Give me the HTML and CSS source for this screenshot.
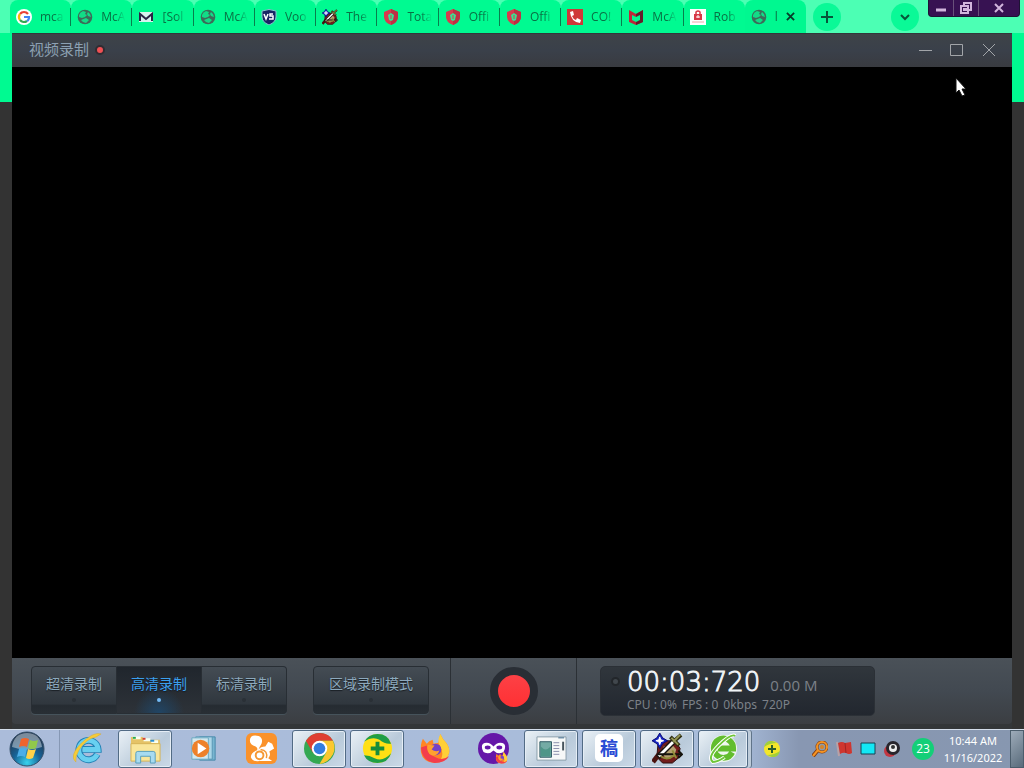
FILE: index.html
```html
<!DOCTYPE html>
<html lang="zh">
<head>
    <meta charset="UTF-8">
    <meta name="viewport" content="width=device-width, initial-scale=1.0">
    <title>视频录制</title>
    <link rel="stylesheet" href="styles.css">
</head>
<body>
    <svg class="sprites" width="0" height="0" aria-hidden="true">
        <symbol id="globe" viewBox="0 0 16 16">
            <circle cx="8" cy="8" r="7.3" fill="#3d6b59"/>
            <path d="M2 6q1-3 4-4l3 1-1 2 2 1-2 2-3 1-3-1zM11 3q3 2 3 5l-3-1-1-2zM4 11l5-2 3 2-3 3q-3 0-5-3z" fill="#12dc87"/>
        </symbol>
        <symbol id="shield" viewBox="0 0 16 16">
            <path d="M8 0l7 3v5q0 5-7 8-7-3-7-8V3z" fill="#d83b4e"/>
            <path d="M8 0l7 3v5q0 5-7 8z" fill="#bd3043"/>
            <path d="M8 4l3 2-1 5-2 1-2-1-1-5z" fill="#3de093"/>
            <path d="M8 6v4" stroke="#d83b4e"/>
        </symbol>
        <symbol id="sword" viewBox="0 0 32 32">
            <path d="M10 8h14l5 8-2 10-6 5H11l-6-6 1-12z" fill="#711c1c" stroke="#2a1010"/>
            <path d="M12 14l8-3 5 6-2 7-8 3-5-6z" fill="#b3a070"/>
            <path d="M1 30l7-9" stroke="#4b130f" stroke-width="5"/>
            <path d="M6 25L24 7" stroke="#1a1512" stroke-width="6"/>
            <path d="M7 24L24 7" stroke="#fff" stroke-width="3"/>
            <path d="M22 9l8-7M19 4l9 9" stroke="#313012" stroke-width="4"/>
            <path d="M22 9l7-7M20 5l7 7" stroke="#949653" stroke-width="2"/>
            <path d="M6 22h24M27 18l4 4-4 4" fill="none" stroke="#15120c" stroke-width="2"/>
            <path d="M9 24q7 5 14-1M21 18l4 8" fill="none" stroke="#908a38" stroke-width="2"/>
            <path d="M8 0l3 5 5 3-5 3-3 5-3-5-5-3 5-3z" fill="#1725c4" stroke="#080b70"/>
            <path d="M8 4l1 3 3 1-3 1-1 3-1-3-3-1 3-1z" fill="#fff" stroke="#fff"/>
        </symbol>
        <symbol id="fox" viewBox="0 0 32 32">
            <path d="M3 6l4 5q2-3 6-4l1 4 5-1 2-9q2 5 6 9 4 5 3 11-3 10-15 10Q3 30 1 20 0 12 3 6z" fill="#ff8624"/>
            <path d="M21 1q2 5 6 9 4 5 3 11-2 7-9 8 4-8 0-15-4-5 0-13z" fill="#ffcf37"/>
            <path d="M1 15q1 14 14 16 11 0 15-7-7 5-14 1Q7 22 7 13z" fill="#f33d4c"/>
            <circle cx="16" cy="17" r="6" fill="#7442c8"/>
            <path d="M8 12l7 1-3 4q4 3 8 1-2 6-8 5-6-3-4-11z" fill="#ffa12f"/>
        </symbol>
    </svg>

    <nav class="browser-strip">
        <div class="tabs">
            <a href="#" class="tab"><svg viewBox="0 0 16 16"><circle cx="8" cy="8" r="8" fill="#fff"/><g fill="none" stroke-width="2.2"><path d="M12 5A5 5 0 0 0 4 5" stroke="#e94235"/><path d="M4 5a5 5 0 0 0 0 6" stroke="#fabb05"/><path d="M4 11a5 5 0 0 0 7 1" stroke="#34a853"/><path d="M8 8h5q0 3-2 4" stroke="#4285f4"/></g></svg><span>mca</span></a>
            <a href="#" class="tab"><svg><use href="#globe"/></svg><span>McA</span></a>
            <a href="#" class="tab"><svg viewBox="0 0 16 16"><path d="M1 3h14v10H1z" fill="#d8f3ef"/><path d="M2 12V5l6 5 6-5v7" fill="none" stroke="#2a2546" stroke-width="2"/></svg><span>[Sol</span></a>
            <a href="#" class="tab"><svg><use href="#globe"/></svg><span>McA</span></a>
            <a href="#" class="tab"><svg viewBox="0 0 16 16"><path d="M1 2q7-3 14 0v6q0 5-7 8-7-3-7-8z" fill="#192664" stroke="#86c9d1"/><path d="M3 5l2 5 2-5m5 0H9v2h3v3H8" fill="none" stroke="#fff" stroke-width="1.5"/></svg><span>Voo</span></a>
            <a href="#" class="tab"><svg><use href="#sword"/></svg><span>The</span></a>
            <a href="#" class="tab"><svg><use href="#shield"/></svg><span>Tota</span></a>
            <a href="#" class="tab"><svg><use href="#shield"/></svg><span>Offi</span></a>
            <a href="#" class="tab"><svg><use href="#shield"/></svg><span>Offi</span></a>
            <a href="#" class="tab"><svg viewBox="0 0 16 16"><path d="M0 0h16v16H0z" fill="#cf3838"/><path d="M3 3l3-1 1 4-2 1q1 3 4 4l1-2 4 2-1 3Q4 13 3 3z" fill="#fff"/></svg><span>CO!</span></a>
            <a href="#" class="tab"><svg viewBox="0 0 16 16"><path d="M1 1l7 4 7-4v12l-7 3-7-3z" fill="#c02639"/><path d="M8 5l7-4v12l-7 3z" fill="#641f2b"/><path d="M4 6l4 2 4-2v5l-4 2-4-2z" fill="#00fa91"/></svg><span>McA</span></a>
            <a href="#" class="tab"><svg viewBox="0 0 16 16"><path d="M0 0h16v16H0z" fill="#fff"/><path d="M6 5V3q2-2 4 0v2" fill="none" stroke="#d83846" stroke-width="1.5"/><path d="M4 5h8v6H4z" fill="#d83846"/><path d="M8 6v3M6 8h4" stroke="#fff"/><path d="M2 13h12" stroke="#edaaad"/></svg><span>Rob</span></a>
            <div class="tab active"><svg><use href="#globe"/></svg><span>l</span><button class="tab-close" aria-label="Close tab"><svg viewBox="0 0 10 10"><path d="M1 1l8 8M9 1L1 9"/></svg></button></div>
        </div>
        <div class="strip-end">
            <button class="round-button" aria-label="New tab"><svg viewBox="0 0 12 12"><path d="M6 0v12M0 6h12"/></svg></button>
            <button class="round-button search-tabs" aria-label="Search tabs"><svg viewBox="0 0 12 12"><path d="M2 4l4 4 4-4"/></svg></button>
            <div class="browser-buttons">
                <button aria-label="Minimize browser"><svg viewBox="0 0 12 12"><path d="M1 8h10" stroke-width="3"/></svg></button>
                <button aria-label="Restore browser"><svg viewBox="0 0 12 12"><path d="M4 3V1h7v7H9M1 4h7v7H1zM4 7h2v1H4z"/></svg></button>
                <button aria-label="Close browser"><svg viewBox="0 0 12 12"><path d="M2 2l8 8M10 2l-8 8"/></svg></button>
            </div>
        </div>
    </nav>

    <main class="recorder">
        <header class="titlebar">
            <h1>视频录制</h1>
            <span class="status-dot"></span>
            <div class="window-buttons">
                <button aria-label="最小化"><svg viewBox="0 0 14 14"><path d="M1 7.5h13"/></svg></button>
                <button aria-label="最大化"><svg viewBox="0 0 14 14"><path d="M.5 1.5h12v11H.5z"/></svg></button>
                <button aria-label="关闭"><svg viewBox="0 0 14 14"><path d="M1 1l12 12M13 1L1 13"/></svg></button>
            </div>
        </header>

        <section class="video"></section>

        <footer class="controls">
            <div class="quality">
                <button class="mode">超清录制<i></i></button>
                <button class="mode selected">高清录制<i></i></button>
                <button class="mode">标清录制<i></i></button>
            </div>
            <button class="mode area">区域录制模式<i></i></button>
            <div class="record-box">
                <button class="record" aria-label="开始录制"></button>
            </div>
            <div class="readout">
                <span class="led"></span>
                <div>
                    <div class="time-row"><span class="time">00:03:720</span><span class="size">0.00 M</span></div>
                    <div class="stats"><span>CPU : 0%</span><span>FPS : 0</span><span>0kbps</span><span>720P</span></div>
                </div>
            </div>
        </footer>
    </main>

    <footer class="taskbar">
        <button class="start" aria-label="Start">
            <svg viewBox="0 0 36 36">
                <defs><radialGradient id="orb" cx=".5" cy=".9" r=".8"><stop offset="0" stop-color="#38d3ed"/><stop offset=".5" stop-color="#176397"/><stop offset="1" stop-color="#24364e"/></radialGradient></defs>
                <circle cx="18" cy="18" r="17" fill="url(#orb)" stroke="#344f69"/>
                <path d="M3 16Q5 2 18 2t15 14q-15 5-30 0z" fill="#c3d3de" opacity=".55"/>
                <path d="M12 8q4-2 8 0l-2 8q-4-2-8 0z" fill="#ef642d"/><path d="M21 9q4 2 8 0l-2 8q-4 2-8 0z" fill="#91c94b"/>
                <path d="M10 18q4-2 8 0l-2 8q-4-2-8 0z" fill="#4baee8"/><path d="M19 18q4 2 8 0l-3 9q-4 2-7 0z" fill="#ffd249"/>
            </svg>
        </button>
        <div class="apps">
            <button class="app" aria-label="Internet Explorer"><svg viewBox="0 0 32 32"><path d="M26 22a10 10 0 1 1 1-5H11" fill="none" stroke="#2382b6" stroke-width="7"/><path d="M26 22a10 10 0 1 1 1-5H11" fill="none" stroke="#68d0f0" stroke-width="5"/><path d="M4 30Q-3 24 8 12 22-2 30 1L25 4Q14 6 7 18q-4 7-3 12z" fill="#f6cc38" stroke="#d7a92e" stroke-width=".5"/></svg></button>
            <button class="app open" aria-label="Explorer"><svg viewBox="0 0 32 32"><path d="M1 4h12l2 3h16v22H1z" fill="#e5c367"/><path d="M3 5h8M14 7h7M22 9h7" stroke="#f9fff0" stroke-width="3"/><path d="M3 5h3" stroke="#27ac50" stroke-width="2"/><path d="M13 6h3" stroke="#d54235" stroke-width="2"/><path d="M21 8h4" stroke="#2a8fd0" stroke-width="2"/><path d="M1 11h30v18H1z" fill="#f9e69a" stroke="#d5b456"/><path d="M6 31V21q0-2 2-2h16q2 0 2 2v10h-5v-7H11v7z" fill="#a7dbf1" stroke="#579ebd"/></svg></button>
            <button class="app" aria-label="Media Player"><svg viewBox="0 0 32 32"><path d="M12 4h16v24H12z" fill="#78b5d0" stroke="#4589aa"/><path d="M8 4h17v23H8z" fill="#abd6e7" stroke="#5996b5"/><path d="M4 5h17v22H4z" fill="#d2e8ef" stroke="#6caac2"/><circle cx="13" cy="16" r="9" fill="#ed812a"/><path d="M10 10l9 6-9 6z" fill="#fff"/></svg></button>
            <button class="app" aria-label="UC Browser"><svg viewBox="0 0 32 32"><rect width="32" height="32" rx="6" fill="#fa922b"/><path d="M13 3Q4 1 4 8q0 4 6 6 3 2 1 4-6 2-6 7 2 5 9 4h13l-4-3q3-3 1-7l5-3-2-5-4-2-3 5q-5 0-7 3 1-3 3-6 2-6-3-8z" fill="#fff"/><circle cx="14" cy="23" r="4" fill="none" stroke="#f59936" stroke-width="2"/><path d="M15 17q8 1 6 9" fill="none" stroke="#f59936" stroke-width="1.5"/></svg></button>
            <button class="app open" aria-label="Chrome"><svg viewBox="0 0 32 32"><circle cx="16" cy="16" r="16" fill="#34a852"/><path d="M2 8Q7 0 16 0q10 0 14 8H16l-7 12z" fill="#df3e32"/><path d="M16 8h14q3 8 0 14-5 9-14 10l7-12z" fill="#fbc82f"/><circle cx="16" cy="16" r="8" fill="#fff"/><circle cx="16" cy="16" r="6" fill="#347de0"/></svg></button>
            <button class="app open" aria-label="360 Safe"><svg viewBox="0 0 32 32"><circle cx="16" cy="16" r="15" fill="#ffe014"/><path d="M2 9Q7 1 16 1q11 0 14 10-6 1-12-4-7-4-16 2zM30 21q-3 10-14 10Q6 31 2 23q6 0 11 3 9 4 17-5z" fill="#1f9e46"/><path d="M16 9v14M9 16h14" stroke="#168c3b" stroke-width="4"/></svg></button>
            <button class="app" aria-label="Firefox"><svg><use href="#fox"/></svg></button>
            <button class="app" aria-label="Private browsing"><svg viewBox="0 0 32 32"><circle cx="16" cy="16" r="16" fill="#6517a8"/><path d="M4 14q0-4 5-4 4 0 7 4 3-4 7-4 5 0 5 4 0 7-6 7-3 0-6-3-3 3-6 3-6 0-6-7z" fill="#fff"/><ellipse cx="10" cy="15" rx="3" ry="2" fill="#6517a8"/><ellipse cx="22" cy="15" rx="3" ry="2" fill="#6517a8"/><use href="#fox" x="18" y="19" width="13" height="13"/></svg></button>
            <button class="app open" aria-label="Viewer"><svg viewBox="0 0 32 32"><path d="M1 4h30v24H1z" fill="#f6f8f8" stroke="#899eaa"/><path d="M4 9h12v16H4z" fill="#74aba5" stroke="#315b64"/><path d="M5 24V14q5 6 10 0v10z" fill="#4f9688"/><path d="M18 10h6M18 13h6M18 16h6M18 19h6M18 22h6" stroke="#8b8fac"/><path d="M28 9v9" stroke="#46545c" stroke-width="2"/><path d="M23 5h6" stroke="#3b678a"/></svg></button>
            <button class="app open" aria-label="Editor"><span class="doc-icon">稿</span></button>
            <button class="app open" aria-label="Game"><svg><use href="#sword"/></svg></button>
            <button class="app open last" aria-label="360 Browser"><svg viewBox="0 0 32 32"><circle cx="16" cy="16" r="14" fill="#eef6ee"/><path d="M25 20a10 10 0 1 1 1-4H10" fill="none" stroke="#62bd2d" stroke-width="6"/><path d="M5 30Q-1 25 11 13 24 0 28 3M4 30q6 0 13-5" fill="none" stroke="#fff" stroke-width="4"/><path d="M5 30Q-1 25 11 13 24 0 28 3M4 30q6 0 13-5" fill="none" stroke="#6fc638" stroke-width="2"/></svg></button>
        </div>
        <div class="tray">
            <svg class="tray-plus" viewBox="0 0 16 16"><circle cx="8" cy="8" r="8" fill="#f3e62a"/><path d="M0 6q2-7 8-6l5 2Q6 2 0 6zM16 10q-2 7-8 6l-5-2q7 0 13-4z" fill="#a0cf3b"/><path d="M8 4v8M4 8h8" stroke="#295e2b" stroke-width="2"/></svg>
            <svg viewBox="0 0 16 16"><circle cx="10" cy="6" r="5" fill="#8c9bab" stroke="#813d10" stroke-width="3"/><path d="M1 15l5-6" stroke="#813d10" stroke-width="4"/><circle cx="10" cy="6" r="5" fill="none" stroke="#f59424" stroke-width="2"/><circle cx="10" cy="6" r="2" fill="#d98428"/><path d="M1 15l5-6" stroke="#f59424" stroke-width="2"/></svg>
            <svg viewBox="0 0 16 16"><path d="M1 1l2 14" stroke="#b9a1a6" stroke-width="2"/><path d="M2 2q4-2 7 0l6-1 1 11q-3 2-6 0-3-1-6 1z" fill="#cf362f"/><path d="M9 2l1 10" stroke="#a12423"/></svg>
            <svg viewBox="0 0 16 16"><path d="M1 2h14v11H1z" fill="#13e8f5" stroke="#174253"/></svg>
            <svg viewBox="0 0 16 16"><circle cx="6" cy="10" r="6" fill="#c33742"/><circle cx="9" cy="7" r="7" fill="#28252b"/><circle cx="9" cy="7" r="4" fill="#eee"/><circle cx="9" cy="6" r="2" fill="#333"/></svg>
            <span class="count">23</span>
        </div>
        <div class="clock"><time>10:44 AM</time><span>11/16/2022</span></div>
        <button class="show-desktop" aria-label="Show desktop"></button>
    </footer>

    <svg class="cursor" viewBox="0 0 12 20"><path d="M1 1v15l3-3 3 6 3-1-3-6h4z" fill="#fff" stroke="#111"/></svg>
</body>
</html>
```
FILE: styles.css
```css
* {
    box-sizing: border-box;
}
body {
    margin: 0;
    min-height: 100vh;
    display: flex;
    flex-direction: column;
    background: linear-gradient(#00fa91 102px, #333333 102px);
    font-family: "Open Sans", "Noto Sans CJK SC", sans-serif;
    font-size: 12px;
}
button {
    margin: 0;
    padding: 0;
    border: 0;
    background: none;
    font-family: inherit;
    color: inherit;
}
svg {
    display: block;
    flex: none;
}
.sprites {
    position: absolute;
}

/* browser tabs */
.browser-strip {
    height: 33px;
    display: flex;
    background: #4cffb4;
}
.tabs {
    flex: 1;
    min-width: 0;
    display: flex;
    padding-left: 10px;
}
.tab {
    flex: 1 1 0;
    min-width: 0;
    display: flex;
    align-items: center;
    gap: 8px;
    padding: 0 4px 0 6px;
    border-radius: 8px 8px 0 0;
    background: linear-gradient(#087f4d, #087f4d) right center / 1px 18px no-repeat #00fa91;
    color: #087044;
    text-decoration: none;
}
.tab > svg {
    width: 16px;
    height: 16px;
}
.tab span {
    flex: 1;
    white-space: nowrap;
    -webkit-mask-image: linear-gradient(to right, #000 50%, transparent 90%);
    mask-image: linear-gradient(to right, #000 50%, transparent 90%);
}
.tab:nth-child(12) {
    background: #00fa91;
}
.tab.active {
    background: #00f890;
}
.tab-close {
    margin-right: 8px;
}
.tab-close svg {
    width: 9px;
    height: 9px;
    stroke: #063d29;
    stroke-width: 2;
}
.strip-end {
    width: 218px;
    display: flex;
    padding: 0 4px 0 7px;
}
.round-button {
    width: 28px;
    height: 28px;
    margin-top: 3px;
    border-radius: 50%;
    background: #0af997;
    display: grid;
    place-items: center;
}
.round-button svg {
    width: 12px;
    height: 12px;
    fill: none;
    stroke: #07563a;
    stroke-width: 2;
}
.search-tabs {
    margin-left: auto;
    margin-right: 9px;
}
.browser-buttons {
    width: 92px;
    height: 17px;
    display: flex;
    background: #371252;
    border: 1px solid #1d1434;
    border-top: 0;
    border-radius: 0 0 4px 4px;
}
.browser-buttons button {
    flex: 1;
    display: grid;
    place-items: center;
    border-right: 1px solid #69517a;
}
.browser-buttons button:last-child {
    flex: 0 0 40px;
    border-right: 0;
}
.browser-buttons svg {
    width: 12px;
    height: 12px;
    fill: none;
    stroke: #d1b5dc;
    stroke-width: 2;
}

/* recorder window */
.recorder {
    flex: 1;
    display: flex;
    flex-direction: column;
    margin: 0 12px;
    background: #333638;
    padding-bottom: 5px;
}
.titlebar {
    height: 34px;
    display: flex;
    align-items: center;
    padding: 0 16px 2px 17px;
    background: linear-gradient(#3e4348, #3a404a 50%, #393b40);
    border-top: 1px solid #32383b;
}
.titlebar h1 {
    margin: 0 0 2px;
    font-size: 15px;
    font-weight: 400;
    line-height: 20px;
    color: #8ca0b2;
}
.status-dot {
    width: 10px;
    height: 10px;
    margin-left: 6px;
    border: 2px solid #302c32;
    border-radius: 50%;
    background: #ef5054;
}
.window-buttons {
    display: flex;
    gap: 18px;
    margin-left: auto;
}
.window-buttons svg {
    width: 14px;
    height: 14px;
    fill: none;
    stroke: #a2a5a9;
}
.video {
    flex: 1;
    background: #000;
}
.controls {
    height: 66px;
    display: flex;
    align-items: flex-start;
    padding: 0 19px;
    background: linear-gradient(#4a5158, #424951 50%, #3b3e42);
    border-radius: 0 0 4px 4px;
}
.quality {
    width: 256px;
    display: flex;
    margin-top: 8px;
}
.mode {
    flex: 1;
    height: 48px;
    padding-top: 7px;
    display: flex;
    flex-direction: column;
    align-items: center;
    border: 1px solid #282e34;
    background: linear-gradient(#444c54, #30373e 80%, #252b31 84%, #292f35);
    box-shadow: 0 1px 0 #46535b;
    color: #8da9bd;
    font-size: 14px;
    line-height: 20px;
    text-shadow: 0 1px 1px #171d22;
}
.quality .mode + .mode {
    border-left: 0;
}
.quality .mode:first-child {
    border-radius: 4px 0 0 4px;
}
.quality .mode:last-child {
    border-radius: 0 4px 4px 0;
}
.mode i {
    width: 4px;
    height: 4px;
    margin-top: 4px;
    border-radius: 50%;
    background: #2a3036;
}
.mode.selected {
    background: radial-gradient(circle at 50% 100%, #204565, transparent 40%), linear-gradient(#20262d, #2d3238);
    color: #3b9fee;
}
.mode.selected i {
    background: #73baf5;
}
.area {
    flex: 0 0 116px;
    margin: 8px 21px 0 26px;
    border-radius: 4px;
}
.record-box {
    flex: 0 0 127px;
    height: 66px;
    display: grid;
    place-items: center;
    border-left: 1px solid #2b3035;
    border-right: 1px solid #2b3035;
}
.record {
    width: 48px;
    height: 48px;
    border: 8px solid #292e35;
    border-radius: 50%;
    background: linear-gradient(#fc4146, #ff3033);
}
.readout {
    flex: 0 0 275px;
    height: 50px;
    margin: 8px 0 0 23px;
    padding-left: 10px;
    display: flex;
    gap: 7px;
    border: 1px solid #2b3036;
    border-radius: 5px;
    background: linear-gradient(#30363c, #22272f);
    color: #7c8188;
}
.led {
    width: 9px;
    height: 9px;
    margin-top: 10px;
    border: 2px solid #22262a;
    border-radius: 50%;
    background: #41474d;
}
.time-row {
    display: flex;
    align-items: center;
    gap: 10px;
    height: 31px;
}
.time {
    color: #f0f4f7;
    font-family: "DejaVu Sans", sans-serif;
    font-weight: 200;
    font-size: 26px;
    line-height: 31px;
    -webkit-text-stroke: 1px #f0f4f7;
}
.size {
    padding-top: 4px;
    font-size: 15px;
    white-space: nowrap;
}
.stats {
    display: flex;
    gap: 5px;
    font-family: "Noto Sans", sans-serif;
    font-size: 12px;
    line-height: 14px;
    white-space: nowrap;
}

/* taskbar */
.taskbar {
    height: 39px;
    display: flex;
    background: linear-gradient(to right, #abbcda, #a8bcda 72%, #8897b2 78%, #8797b0);
    border-top: 1px solid #d4deea;
}
.start {
    flex: 0 0 60px;
    padding-left: 9px;
    border-right: 1px solid #8698b4;
}
.start svg {
    width: 36px;
    height: 36px;
}
.apps {
    display: flex;
    gap: 4px;
}
.app {
    width: 54px;
    padding-bottom: 2px;
    display: grid;
    place-items: center;
}
.app svg {
    width: 31px;
    height: 31px;
}
.app.open {
    border: 1px solid #526b85;
    border-radius: 3px;
    background: linear-gradient(135deg, #eaf1f6, #b9cada 60%, #cbd9e7);
    box-shadow: inset 0 0 0 1px #e5edf5;
}
.app.last {
    width: 50px;
    box-shadow: inset 0 0 0 1px #e5edf5, 3px 0 0 #bdcbd9, 4px 0 0 #607489;
}
.doc-icon {
    width: 28px;
    height: 28px;
    border-radius: 5px;
    background: #fff;
    color: #294bd4;
    font-size: 18px;
    font-weight: 700;
    line-height: 28px;
}
.tray {
    display: flex;
    align-items: center;
    gap: 8px;
    margin-left: auto;
}
.tray svg {
    width: 16px;
    height: 16px;
}
.tray .tray-plus {
    margin-right: 24px;
}
.count {
    width: 22px;
    height: 22px;
    margin-left: 4px;
    border-radius: 50%;
    background: #13cf78;
    color: #fff;
    line-height: 22px;
    text-align: center;
}
.clock {
    width: 76px;
    display: flex;
    flex-direction: column;
    align-items: center;
    padding: 2px 0 0 2px;
    color: #fff;
    font-family: "Noto Sans", sans-serif;
    font-size: 11px;
    line-height: 17px;
}
.show-desktop {
    width: 14px;
    border: 1px solid #4b5d6c;
    background: linear-gradient(135deg, #9dabb9, #596b7b);
}

.cursor {
    position: absolute;
    left: 955px;
    top: 77px;
    width: 12px;
    height: 20px;
}
```
